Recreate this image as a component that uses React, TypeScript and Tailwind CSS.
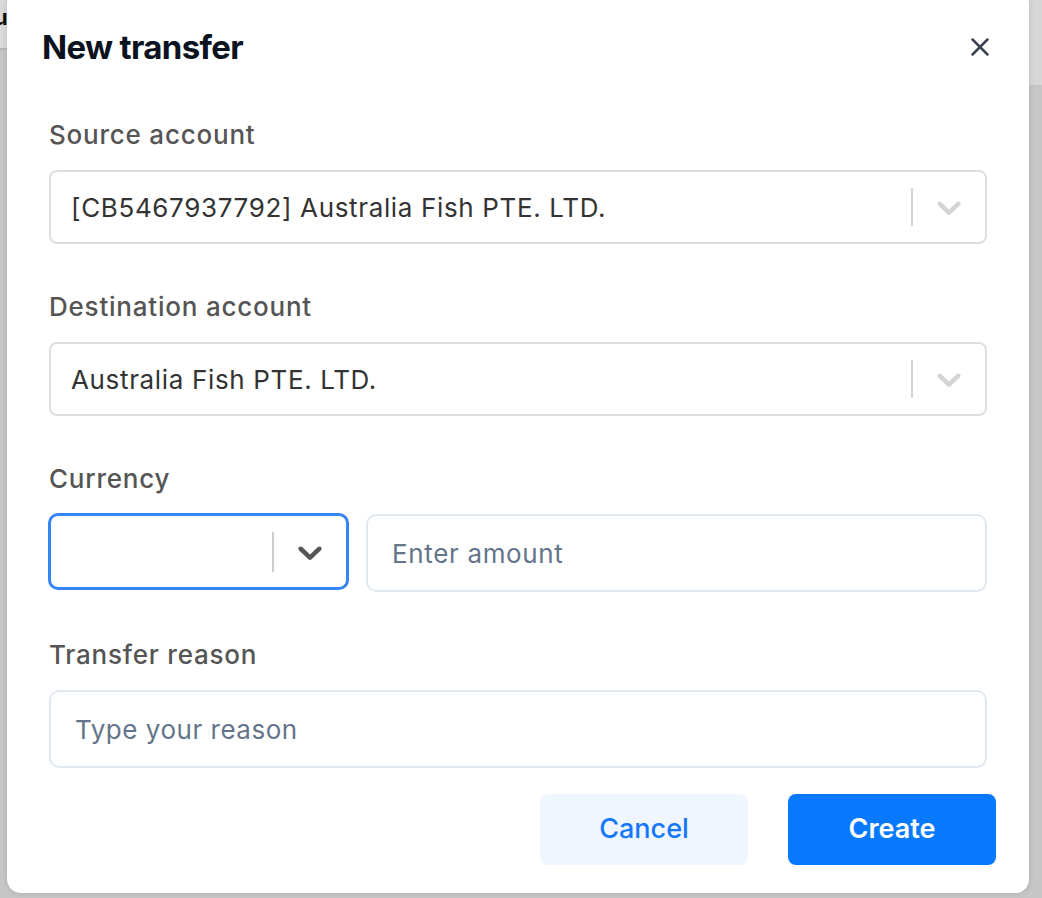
import { X } from "lucide-react";

const font = { fontFamily: "Inter, 'Noto Sans', sans-serif" };

function Chevron({ className }: { className: string }) {
  return (
    <svg viewBox="0 0 20 20" width="40" height="40" className={className} fill="currentColor">
      <path d="M4.516 7.548c0.436-0.446 1.043-0.481 1.576 0l3.908 3.747 3.908-3.747c0.533-0.481 1.141-0.446 1.574 0 0.436 0.445 0.408 1.197 0 1.615-0.406 0.418-4.695 4.502-4.695 4.502-0.217 0.223-0.502 0.335-0.787 0.335s-0.57-0.112-0.789-0.335c0 0-4.287-4.084-4.695-4.502s-0.436-1.17 0-1.615z" />
    </svg>
  );
}

function SelectBox({ value }: { value: string }) {
  return (
    <div className="flex h-[74px] items-center rounded-[8px] border-2 border-[#dedede] bg-white">
      <div className="flex-1 truncate pl-[20px] text-[26px] tracking-[0.025em] text-[#333333]">{value}</div>
      <div className="h-[38px] w-[2px] bg-[#d4d4d4]" />
      <div className="flex w-[72px] items-center justify-center">
        <Chevron className="text-[#d4d4d4]" />
      </div>
    </div>
  );
}

function Label({ children }: { children: string }) {
  return (
    <div className="h-[32px] text-[26px] font-medium leading-[32px] tracking-[0.03em] text-[#555555]">
      {children}
    </div>
  );
}

export default function App() {
  return (
    <div className="relative h-[898px] w-full overflow-hidden bg-[#c6c6c6]" style={font}>
      {/* page behind the overlay */}
      <div className="absolute left-0 top-0 h-[50px] w-[12px] border-b-2 border-[#b9b9b9] bg-[#dadada]">
        <span className="absolute left-[-6px] top-[6px] text-[22px] font-bold leading-none text-[#111]">u</span>
      </div>
      <div className="absolute right-0 top-0 h-[85px] w-[14px] bg-[#d6d6d6]" />

      {/* dialog */}
      <div className="absolute left-[7px] top-[-10px] flex h-[903px] w-[1022px] flex-col rounded-[14px] bg-white shadow-[0_0_6px_rgba(0,0,0,0.12)]">
        <div className="flex items-center justify-between pl-[35px] pr-[34px] pt-[37px]">
          <h2 className="text-[33px] font-bold leading-[40px] tracking-[-0.02em] text-[#0b1220]">New transfer</h2>
          <button className="text-[#3b4252]">
            <X size={30} strokeWidth={2} />
          </button>
        </div>

        <div className="flex flex-col px-[42px] pt-[52px]">
          <Label>Source account</Label>
          <div className="mt-[19px]">
            <SelectBox value="[CB5467937792] Australia Fish PTE. LTD." />
          </div>

          <div className="mt-[47px]">
            <Label>Destination account</Label>
          </div>
          <div className="mt-[19px]">
            <SelectBox value="Australia Fish PTE. LTD." />
          </div>

          <div className="mt-[47px]">
            <Label>Currency</Label>
          </div>
          <div className="mt-[18px] flex items-start gap-[17px]">
            <div className="ml-[-1px] flex h-[77px] w-[301px] items-center rounded-[10px] border-[3px] border-[#3784f4] bg-white">
              <div className="flex-1" />
              <div className="h-[40px] w-[2px] bg-[#cccccc]" />
              <div className="flex w-[72px] items-center justify-center">
                <Chevron className="text-[#555555]" />
              </div>
            </div>
            <input
              className="mt-[1px] h-[78px] flex-1 rounded-[10px] border-2 border-[#e2e8f0] bg-white px-[24px] text-[26px] tracking-[0.025em] text-[#333] outline-none placeholder:text-[#64748b]"
              placeholder="Enter amount"
            />
          </div>

          <div className="mt-[47px]">
            <Label>Transfer reason</Label>
          </div>
          <input
            className="mt-[19px] h-[78px] w-full rounded-[10px] border-2 border-[#e2e8f0] bg-white px-[24px] text-[26px] tracking-[0.02em] text-[#333] outline-none placeholder:text-[#64748b]"
            placeholder="Type your reason"
          />
        </div>

        <div className="mt-[26px] flex justify-end gap-[40px] pr-[33px]">
          <button className="h-[71px] w-[208px] rounded-[8px] bg-[#f0f6ff] text-[27px] font-medium text-[#1577fd]">
            Cancel
          </button>
          <button className="h-[71px] w-[208px] rounded-[8px] bg-[#0679ff] text-[27px] font-semibold text-white">
            Create
          </button>
        </div>
      </div>
    </div>
  );
}
